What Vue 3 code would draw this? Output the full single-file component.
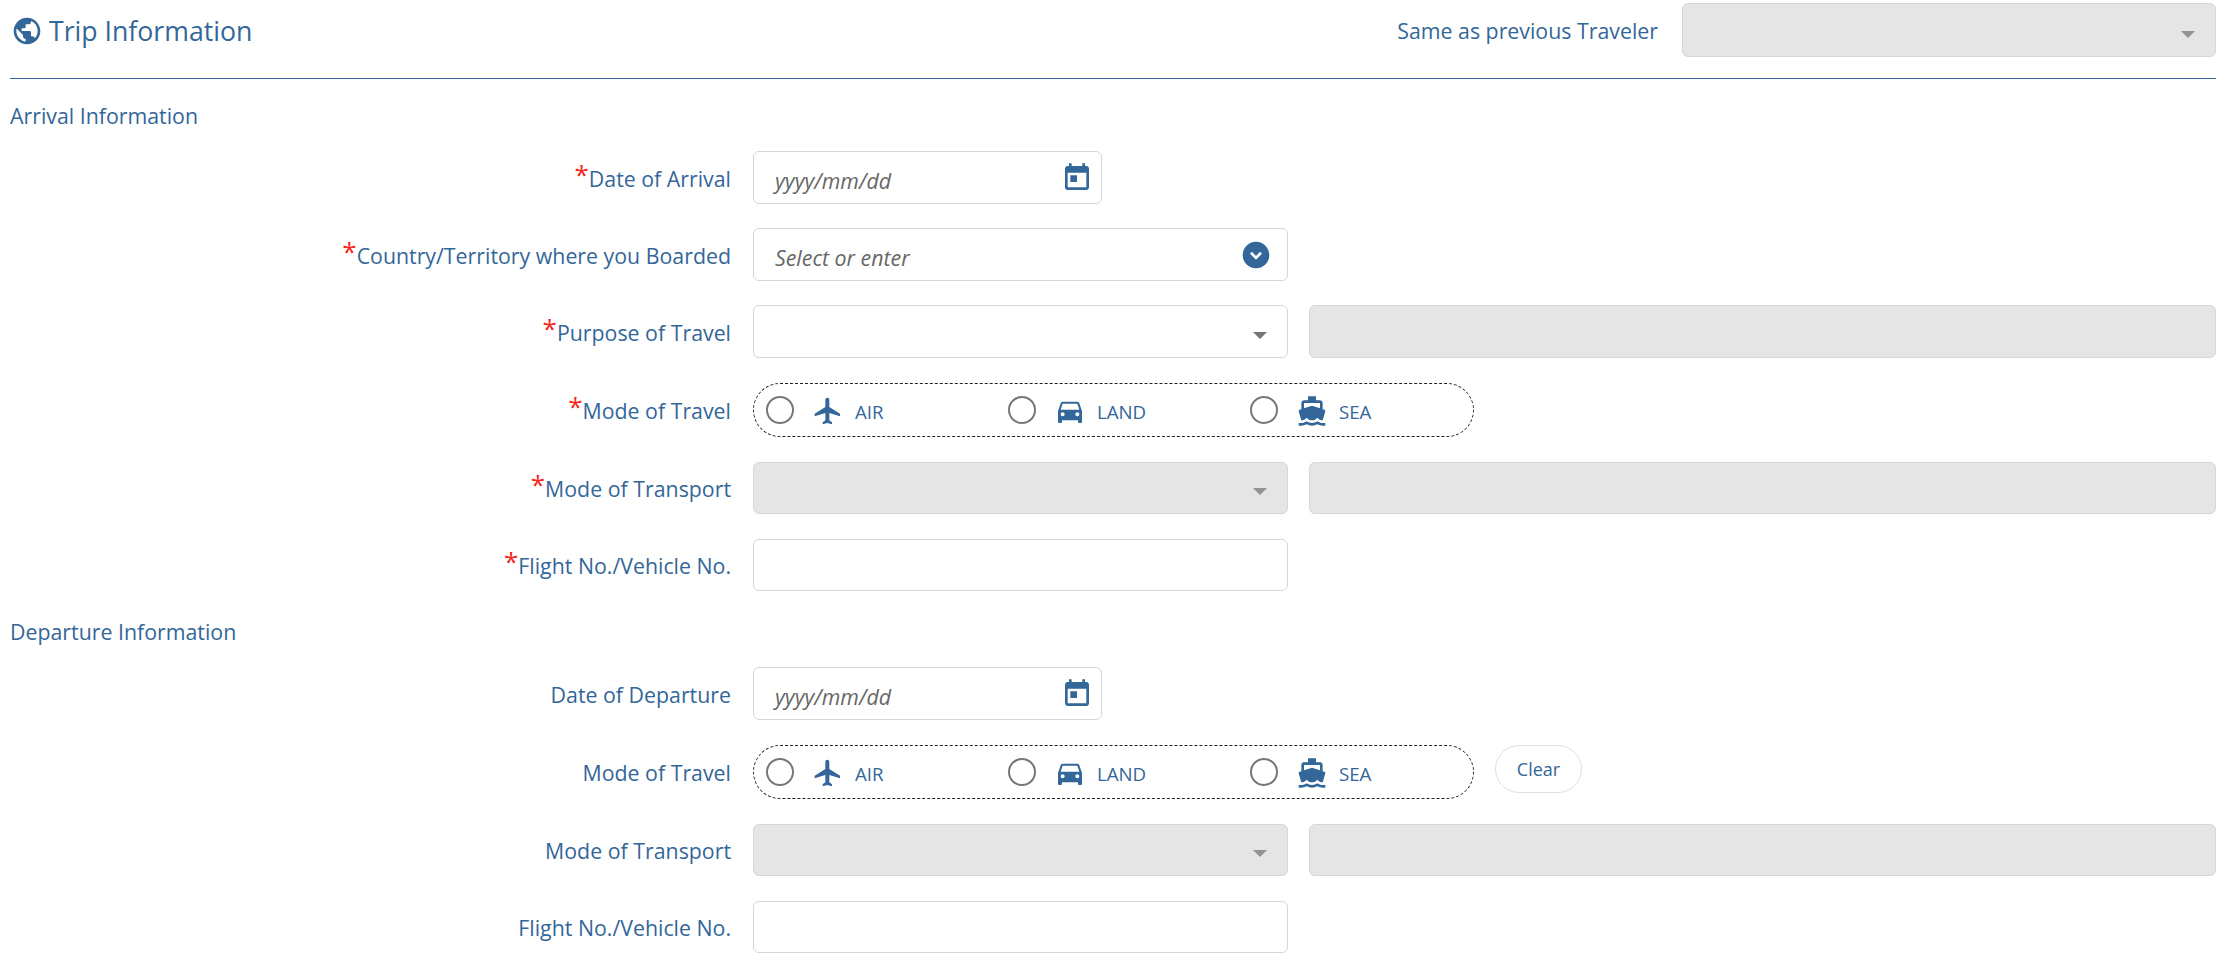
<script setup>
const icons = {
  air: 'M21 16v-2l-8-5V3.5c0-.83-.67-1.5-1.5-1.5S10 2.67 10 3.5V9l-8 5v2l8-2.5V19l-2 1.5V22l3.5-1 3.5 1v-1.5L13 19v-5.5l8 2.5z',
  land: 'M18.92 6.01C18.72 5.42 18.16 5 17.5 5h-11c-.66 0-1.21.42-1.42 1.01L3 12v8c0 .55.45 1 1 1h1c.55 0 1-.45 1-1v-1h12v1c0 .55.45 1 1 1h1c.55 0 1-.45 1-1v-8l-2.08-5.99zM6.5 16c-.83 0-1.5-.67-1.5-1.5S5.67 13 6.5 13s1.5.67 1.5 1.5S7.33 16 6.5 16zm11 0c-.83 0-1.5-.67-1.5-1.5s.67-1.5 1.5-1.5 1.5.67 1.5 1.5-.67 1.5-1.5 1.5zM5 11l1.5-4.5h11L19 11H5z',
  sea: 'M20 21c-1.39 0-2.78-.47-4-1.32-2.44 1.71-5.56 1.71-8 0C6.78 20.53 5.39 21 4 21H2v2h2c1.38 0 2.74-.35 4-.99 2.52 1.29 5.48 1.29 8 0 1.26.65 2.62.99 4 .99h2v-2h-2zM3.95 19H4c1.6 0 3.02-.88 4-2 .98 1.12 2.4 2 4 2s3.02-.88 4-2c.98 1.12 2.4 2 4 2h.05l1.89-6.68c.08-.26.06-.54-.06-.78s-.34-.42-.6-.5L20 10.62V6c0-1.1-.9-2-2-2h-3V1H9v3H6c-1.1 0-2 .9-2 2v4.62l-1.29.42c-.26.08-.48.26-.6.5s-.15.52-.06.78L3.95 19zM6 6h12v3.97L12 8 6 9.97V6z',
  today: 'M19 3h-1V1h-2v2H8V1H6v2H5c-1.11 0-1.99.9-1.99 2L3 19c0 1.1.89 2 2 2h14c1.1 0 2-.9 2-2V5c0-1.1-.9-2-2-2zm0 16H5V8h14v11zM7 10h5v5H7z',
  chevron: 'M12 2C6.48 2 2 6.48 2 12s4.48 10 10 10 10-4.48 10-10S17.52 2 12 2zm0 13.5L7.5 11l1.41-1.41L12 12.67l3.09-3.08L16.5 11 12 15.5z',
  globe: 'M12 2C6.48 2 2 6.48 2 12s4.48 10 10 10 10-4.48 10-10S17.52 2 12 2zm-1 17.93c-3.95-.49-7-3.85-7-7.93 0-.62.08-1.21.21-1.79L9 15v1c0 1.1.9 2 2 2v1.93zm6.9-2.54c-.26-.81-1-1.39-1.9-1.39h-1v-3c0-.55-.45-1-1-1H8v-2h2c.55 0 1-.45 1-1V7h2c1.1 0 2-.9 2-2v-.41c2.93 1.19 5 4.06 5 7.41 0 2.08-.8 3.97-2.1 5.39z'
}
const modes = [
  { key: 'air', label: 'AIR' },
  { key: 'land', label: 'LAND' },
  { key: 'sea', label: 'SEA' }
]
const sections = [
  {
    title: 'Arrival Information',
    required: true,
    date: 'Date of Arrival',
    showBoard: true,
    clear: false
  },
  {
    title: 'Departure Information',
    required: false,
    date: 'Date of Departure',
    showBoard: false,
    clear: true
  }
]
</script>

<template>
  <main class="page">
    <header class="head">
      <h1 class="title">
        <svg class="icon" viewBox="0 0 24 24"><path :d="icons.globe" /></svg>
        <span>Trip Information</span>
      </h1>
      <div class="prev">
        <span class="prev-label">Same as previous Traveler</span>
        <div class="field prev-select disabled"><i class="caret"></i></div>
      </div>
    </header>

    <section v-for="s in sections" :key="s.title" class="section">
      <h2 class="sub">{{ s.title }}</h2>

      <div class="row">
        <label class="lbl"><b v-if="s.required" class="star">*</b>{{ s.date }}</label>
        <div class="field date">
          <span class="ph">yyyy/mm/dd</span>
          <svg class="icon nudge" viewBox="0 0 24 24"><path :d="icons.today" /></svg>
        </div>
      </div>

      <div v-if="s.showBoard" class="row">
        <label class="lbl"><b class="star">*</b>Country/Territory where you Boarded</label>
        <div class="field wide">
          <span class="ph">Select or enter</span>
          <svg class="icon nudge" viewBox="0 0 24 24"><path :d="icons.chevron" /></svg>
        </div>
      </div>

      <div v-if="s.showBoard" class="row">
        <label class="lbl"><b class="star">*</b>Purpose of Travel</label>
        <div class="field wide"><i class="caret"></i></div>
        <div class="field fill disabled"></div>
      </div>

      <div class="row row-radio">
        <label class="lbl"><b v-if="s.required" class="star">*</b>Mode of Travel</label>
        <div class="radios">
          <div v-for="m in modes" :key="m.key" class="mode">
            <span class="circle"></span>
            <svg class="icon nudge" viewBox="0 0 24 24"><path :d="icons[m.key]" /></svg>
            <span class="mode-text">{{ m.label }}</span>
          </div>
        </div>
        <button v-if="s.clear" class="clear" type="button">Clear</button>
      </div>

      <div class="row">
        <label class="lbl"><b v-if="s.required" class="star">*</b>Mode of Transport</label>
        <div class="field wide disabled"><i class="caret"></i></div>
        <div class="field fill disabled"></div>
      </div>

      <div class="row">
        <label class="lbl"><b v-if="s.required" class="star">*</b>Flight No./Vehicle No.</label>
        <div class="field wide"></div>
      </div>
    </section>
  </main>
</template>

<style scoped>
.page {
  width: 2232px;
  box-sizing: border-box;
  padding: 3px 16px 0 10px;
  font-family: "Open Sans", "Noto Sans", sans-serif;
  color: #336699;
}
.head {
  display: flex;
  justify-content: space-between;
  align-items: flex-start;
  height: 75px;
  border-bottom: 1px solid #336699;
}
.title {
  display: flex;
  align-items: center;
  gap: 6px;
  margin: 8px 0 0;
  padding-left: 1px;
  font-size: 26.67px;
  font-weight: 400;
  line-height: 40px;
}
.icon {
  width: 32px;
  height: 32px;
  flex: none;
  fill: #336699;
}
.nudge {
  margin-top: 2px;
}
.prev {
  display: flex;
  align-items: center;
  gap: 24px;
}
.prev-label {
  font-size: 21.33px;
}
.section {
  display: flex;
  flex-direction: column;
  gap: 24.5px;
}
.section + .section {
  margin-top: 25px;
}
.sub {
  margin: 21px 0 -3.5px;
  padding-top: 1px;
  font-size: 21.33px;
  font-weight: 400;
  line-height: 29px;
}
.section + .section .sub {
  margin-top: 0;
}
.row {
  display: flex;
  align-items: center;
  height: 52.5px;
}
.row-radio {
  height: 54.5px;
  margin-top: 0.5px;
}
.lbl {
  width: 721px;
  flex: none;
  margin-right: 22px;
  padding-top: 3px;
  text-align: right;
  font-size: 21.33px;
  line-height: 30px;
}
.star {
  color: #f5261c;
  font-size: 26px;
  font-weight: 400;
  line-height: 0;
  vertical-align: 3px;
}
.field {
  display: flex;
  align-items: center;
  justify-content: space-between;
  box-sizing: border-box;
  height: 52.5px;
  padding: 0 15px 0 21px;
  border: 1px solid #d6d6d6;
  border-radius: 6px;
  background: #fff;
  flex: none;
}
.prev-select {
  width: 534px;
  height: 54px;
}
.date {
  width: 349px;
  padding-right: 8px;
}
.wide {
  width: 535px;
}
.fill {
  flex: 1;
  margin-left: 21px;
}
.disabled {
  background: #e5e5e5;
}
.ph {
  margin-top: 7px;
  font-size: 21.33px;
  font-style: italic;
  color: #666;
}
.caret {
  margin: 8px 5px 0 auto;
  width: 0;
  height: 0;
  border-left: 7px solid transparent;
  border-right: 7px solid transparent;
  border-top: 7px solid #757575;
}
.disabled .caret {
  border-top-color: #929292;
}
.radios {
  display: flex;
  box-sizing: border-box;
  width: 721px;
  height: 54.5px;
  padding-left: 12px;
  border: 1px dashed #222;
  border-radius: 27px;
  flex: none;
}
.mode {
  display: flex;
  align-items: center;
  flex: none;
  width: 242px;
}
.circle {
  box-sizing: border-box;
  width: 28px;
  height: 28px;
  margin-right: 18px;
  border: 2px solid #777;
  border-radius: 50%;
}
.mode-text {
  margin: 3px 0 0 11px;
  font-size: 18.67px;
}
.clear {
  box-sizing: border-box;
  width: 87px;
  height: 48px;
  margin: -6px 0 0 21px;
  padding: 0;
  border: 1px solid #e0e0e0;
  border-radius: 24px;
  background: #fff;
  color: #336699;
  font-family: inherit;
  font-size: 18px;
}
</style>

<style>
html, body { background: #fff; }
</style>
